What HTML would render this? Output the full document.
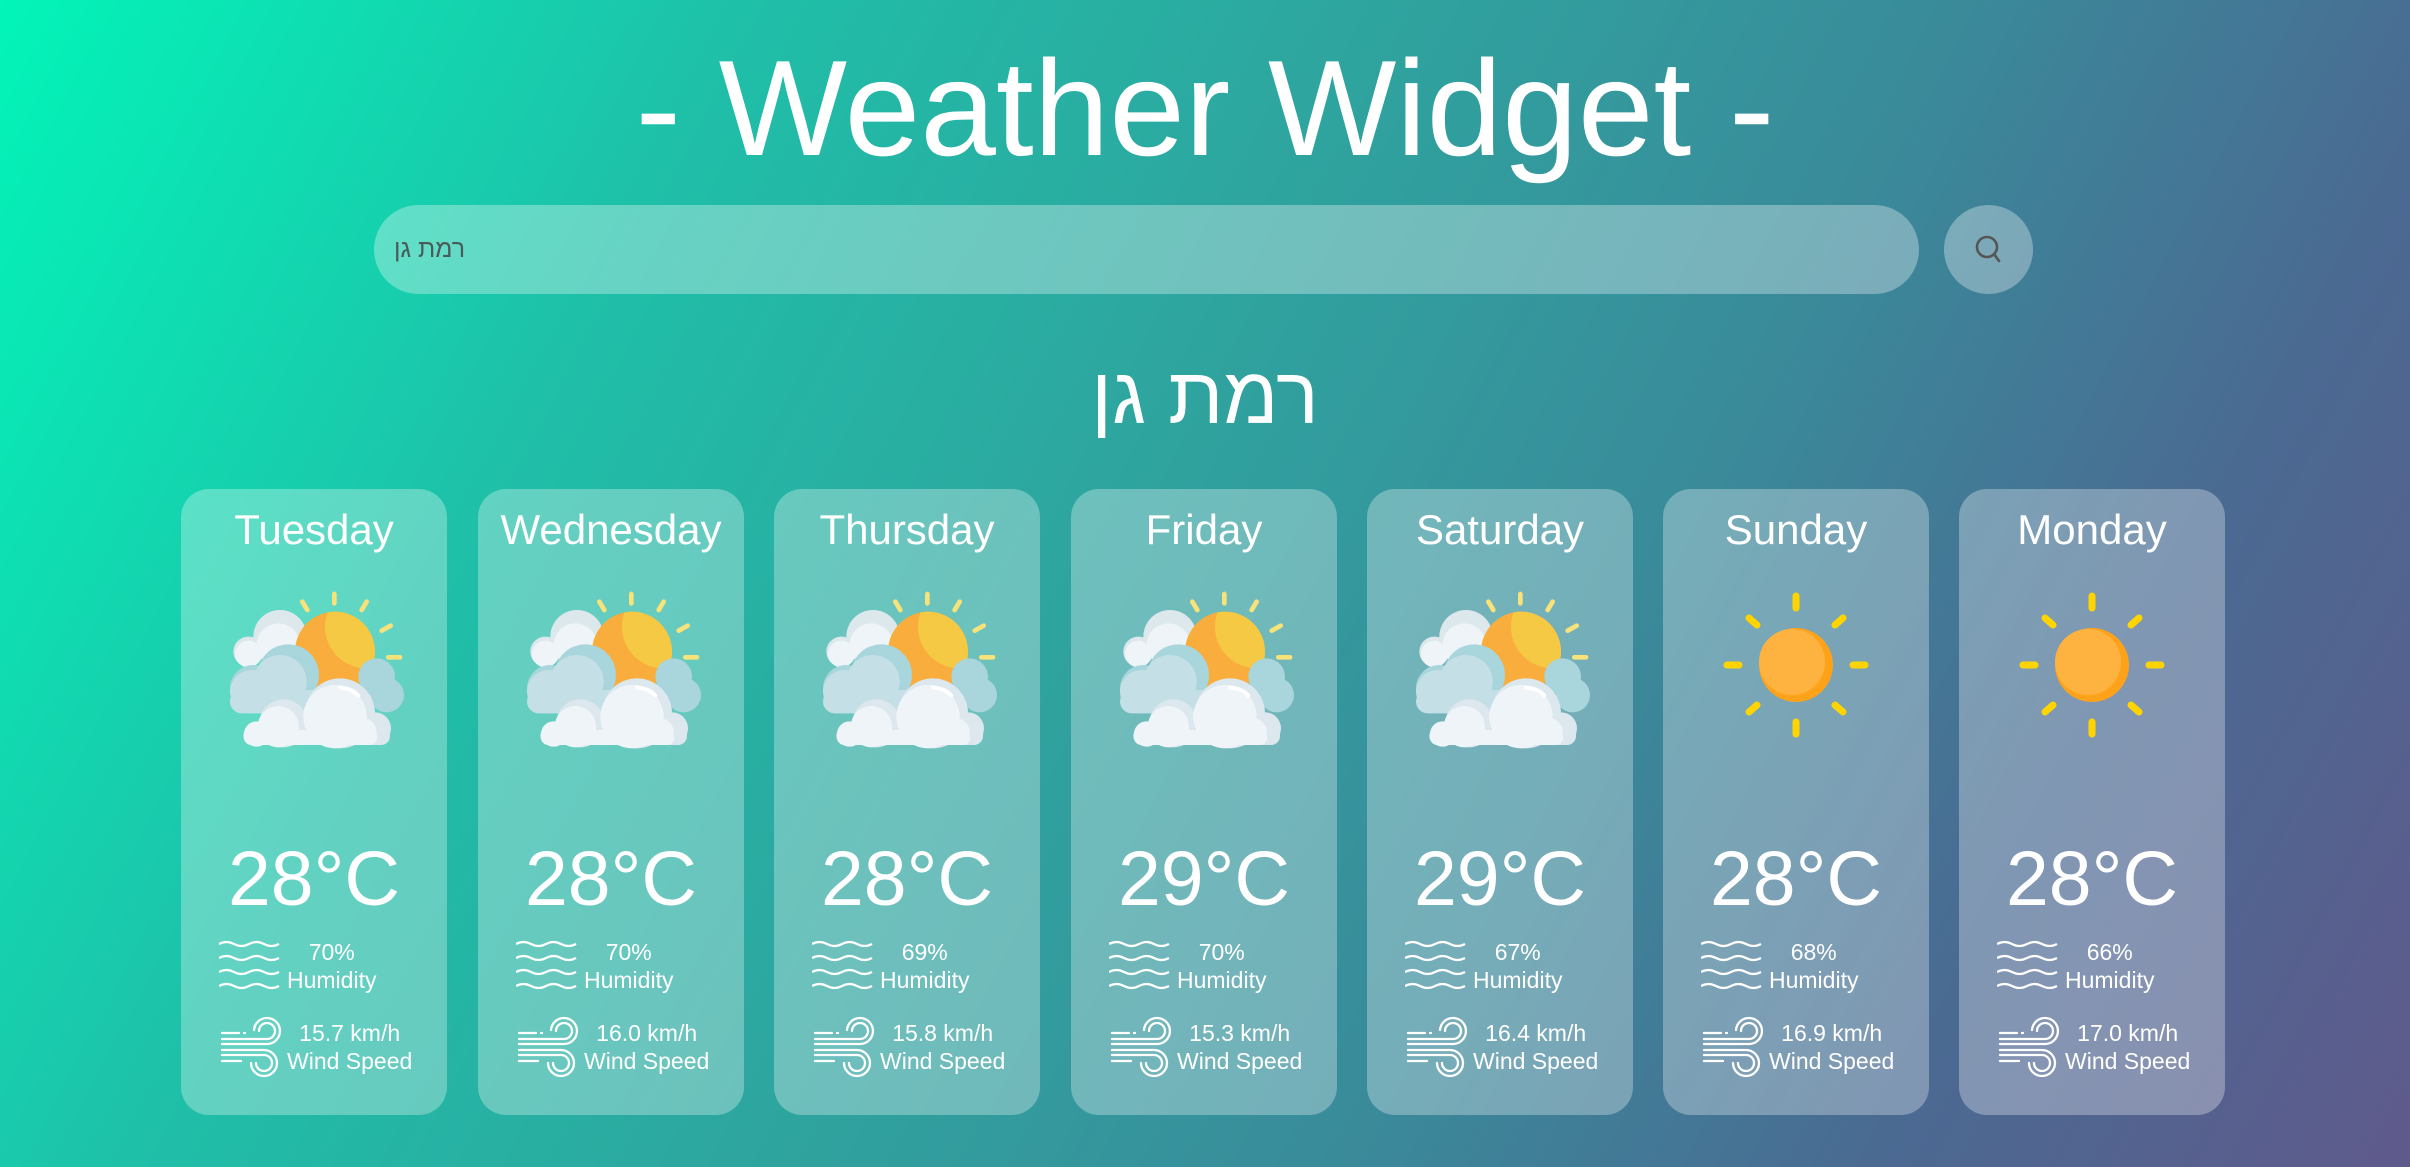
<!DOCTYPE html>
<html><head><meta charset="utf-8"><style>
*{box-sizing:border-box;margin:0;padding:0}
html,body{width:2410px;height:1167px;overflow:hidden}
body{font-family:"Liberation Sans",Arial,"Noto Sans CJK SC",sans-serif;color:#fff;
background:linear-gradient(118deg,#02f5b9 0%,#1fbfa8 25%,#2ea59f 45%,#3a8a9a 65%,#4a6a92 82%,#5f5a8c 100%);position:relative}
h1{position:absolute;left:0;right:0;top:23px;text-align:center;font-weight:400;font-size:136px;line-height:170px}
.search{position:absolute;left:374px;top:205px;width:1545px;height:89px;border-radius:45px;background:rgba(255,255,255,0.32)}
.search span{position:absolute;left:20px;top:30px;font-size:25px;color:#4a5a58;font-family:"Liberation Sans","DejaVu Sans",sans-serif}
.btn{position:absolute;left:1944px;top:205px;width:89px;height:89px;border-radius:50%;background:rgba(255,255,255,0.32)}
.city{position:absolute;left:0;right:0;top:346px;text-align:center;font-size:80px;line-height:100px;font-family:"Liberation Sans","DejaVu Sans",sans-serif}
.card{position:absolute;top:489px;width:266px;height:626px;border-radius:28px;background:rgba(255,255,255,0.3)}
.day{position:absolute;top:11px;left:-20px;right:-20px;text-align:center;font-size:42px;line-height:60px}
.ico{position:absolute;left:39px;top:91px}
.temp{position:absolute;top:340px;left:0;right:0;text-align:center;font-size:77px;line-height:100px}
.hum,.wind{position:absolute;left:38px;font-size:23px;line-height:28px}
.hum{top:449px}.wind{top:530px}
.hum svg{position:absolute;left:0;top:0}
.wind svg{position:absolute;left:-4px;top:-11px}
.t{position:absolute;left:68px;text-align:center;white-space:nowrap}
</style></head><body>
<h1>- Weather Widget -</h1>
<div class="search"><span>רמת גן</span></div>
<div class="btn"><svg width="89" height="89" viewBox="0 0 89 89"><circle cx="43" cy="42" r="10" fill="none" stroke="#555" stroke-width="2.6"/><line x1="50" y1="49" x2="55" y2="56" stroke="#555" stroke-width="2.6" stroke-linecap="round"/></svg></div>
<div class="city">רמת גן</div>

<svg width="0" height="0" style="position:absolute">
<defs>
<clipPath id="sc"><circle cx="345" cy="215" r="120"/></clipPath>
<g id="cs">
<g stroke="#f8e27a" stroke-width="14" stroke-linecap="round">
<line x1="343" y1="42" x2="343" y2="70"/><line x1="247" y1="65" x2="262" y2="90"/><line x1="440" y1="65" x2="425" y2="90"/>
<line x1="485" y1="152" x2="512" y2="137"/><line x1="505" y1="232" x2="540" y2="232"/>
</g>
<g fill="#dde8ed"><circle cx="180" cy="170" r="80"/><circle cx="85" cy="215" r="45"/><circle cx="245" cy="215" r="50"/></g>
<g fill="#eef4f7"><circle cx="175" cy="195" r="65"/><circle cx="85" cy="222" r="40"/></g>
<circle cx="345" cy="215" r="120" fill="#f9ad3c"/>
<circle cx="440" cy="140" r="125" fill="#f6c945" clip-path="url(#sc)"/>
<g fill="#a9d5dc"><circle cx="205" cy="285" r="92"/><circle cx="470" cy="290" r="55"/><circle cx="500" cy="345" r="52"/><circle cx="100" cy="325" r="70"/></g>
<g fill="#c4dfe6"><circle cx="180" cy="305" r="80"/><circle cx="95" cy="335" r="65"/><rect x="30" y="330" width="420" height="70" rx="35"/></g>
<g fill="#dce8ed"><circle cx="360" cy="400" r="105"/><circle cx="190" cy="430" r="72"/><circle cx="465" cy="445" r="48"/><rect x="70" y="440" width="440" height="55" rx="27"/></g>
<g fill="#eef4f7"><circle cx="345" cy="410" r="95"/><circle cx="175" cy="440" r="62"/><circle cx="110" cy="462" r="38"/><circle cx="430" cy="455" r="40"/><rect x="72" y="450" width="400" height="45" rx="22"/></g>
<path d="M360 322 q40 5 55 25" stroke="#fff" stroke-width="12" fill="none" stroke-linecap="round"/>
</g>
<g id="sun">
<g stroke="#ffd400" stroke-width="7" stroke-linecap="round">
<line x1="73" y1="4" x2="73" y2="16"/><line x1="73" y1="130" x2="73" y2="142"/>
<line x1="4" y1="73" x2="16" y2="73"/><line x1="130" y1="73" x2="142" y2="73"/>
<line x1="26" y1="26" x2="34" y2="33"/><line x1="112" y1="113" x2="120" y2="120"/>
<line x1="120" y1="26" x2="112" y2="33"/><line x1="34" y1="113" x2="26" y2="120"/>
</g>
<circle cx="73" cy="73" r="37" fill="#fea319"/>
<circle cx="69" cy="70" r="33" fill="#feb341"/>
</g>
<g id="wave" fill="none" stroke="#fff" stroke-width="2.2">
<path d="M0 4 q7.5 -4 15 0 t15 0 t15 0 t15 0"/><path d="M0 18 q7.5 -4 15 0 t15 0 t15 0 t15 0"/>
<path d="M0 32 q7.5 -4 15 0 t15 0 t15 0 t15 0"/><path d="M0 46 q7.5 -4 15 0 t15 0 t15 0 t15 0"/>
</g>
<g id="wnd" fill="none" stroke="#fff" stroke-width="2.3" stroke-linecap="round">
<path d="M7 25 H24 M29 25 h1"/>
<path d="M7 31 H52 A8 8 0 1 0 44 23"/>
<path d="M7 36 H52 A13 13 0 1 0 39 22"/>
<path d="M7 42 H49 A13 13 0 1 1 36 55"/>
<path d="M7 47 H49 A8 8 0 1 1 41 55"/>
<path d="M7 53 H26"/>
</g>
</defs></svg>

<div class="card" style="left:181px"><div class="day">Tuesday</div><svg class="ico" width="200" height="175" viewBox="0 0 600 525"><use href="#cs"/></svg><div class="temp">28°C</div>
<div class="hum"><svg width="62" height="52" viewBox="0 -2 62 52"><use href="#wave"/></svg><div class="t">70%<br>Humidity</div></div>
<div class="wind"><svg width="75" height="80" viewBox="0 0 75 80"><use href="#wnd"/></svg><div class="t">15.7 km/h<br>Wind Speed</div></div></div>

<div class="card" style="left:478px"><div class="day">Wednesday</div><svg class="ico" width="200" height="175" viewBox="0 0 600 525"><use href="#cs"/></svg><div class="temp">28°C</div>
<div class="hum"><svg width="62" height="52" viewBox="0 -2 62 52"><use href="#wave"/></svg><div class="t">70%<br>Humidity</div></div>
<div class="wind"><svg width="75" height="80" viewBox="0 0 75 80"><use href="#wnd"/></svg><div class="t">16.0 km/h<br>Wind Speed</div></div></div>

<div class="card" style="left:774px"><div class="day">Thursday</div><svg class="ico" width="200" height="175" viewBox="0 0 600 525"><use href="#cs"/></svg><div class="temp">28°C</div>
<div class="hum"><svg width="62" height="52" viewBox="0 -2 62 52"><use href="#wave"/></svg><div class="t">69%<br>Humidity</div></div>
<div class="wind"><svg width="75" height="80" viewBox="0 0 75 80"><use href="#wnd"/></svg><div class="t">15.8 km/h<br>Wind Speed</div></div></div>

<div class="card" style="left:1071px"><div class="day">Friday</div><svg class="ico" width="200" height="175" viewBox="0 0 600 525"><use href="#cs"/></svg><div class="temp">29°C</div>
<div class="hum"><svg width="62" height="52" viewBox="0 -2 62 52"><use href="#wave"/></svg><div class="t">70%<br>Humidity</div></div>
<div class="wind"><svg width="75" height="80" viewBox="0 0 75 80"><use href="#wnd"/></svg><div class="t">15.3 km/h<br>Wind Speed</div></div></div>

<div class="card" style="left:1367px"><div class="day">Saturday</div><svg class="ico" width="200" height="175" viewBox="0 0 600 525"><use href="#cs"/></svg><div class="temp">29°C</div>
<div class="hum"><svg width="62" height="52" viewBox="0 -2 62 52"><use href="#wave"/></svg><div class="t">67%<br>Humidity</div></div>
<div class="wind"><svg width="75" height="80" viewBox="0 0 75 80"><use href="#wnd"/></svg><div class="t">16.4 km/h<br>Wind Speed</div></div></div>

<div class="card" style="left:1663px"><div class="day">Sunday</div><svg class="ico" style="left:60px;top:103px" width="147" height="147" viewBox="0 0 147 147"><use href="#sun"/></svg><div class="temp">28°C</div>
<div class="hum"><svg width="62" height="52" viewBox="0 -2 62 52"><use href="#wave"/></svg><div class="t">68%<br>Humidity</div></div>
<div class="wind"><svg width="75" height="80" viewBox="0 0 75 80"><use href="#wnd"/></svg><div class="t">16.9 km/h<br>Wind Speed</div></div></div>

<div class="card" style="left:1959px"><div class="day">Monday</div><svg class="ico" style="left:60px;top:103px" width="147" height="147" viewBox="0 0 147 147"><use href="#sun"/></svg><div class="temp">28°C</div>
<div class="hum"><svg width="62" height="52" viewBox="0 -2 62 52"><use href="#wave"/></svg><div class="t">66%<br>Humidity</div></div>
<div class="wind"><svg width="75" height="80" viewBox="0 0 75 80"><use href="#wnd"/></svg><div class="t">17.0 km/h<br>Wind Speed</div></div></div>
</body></html>
